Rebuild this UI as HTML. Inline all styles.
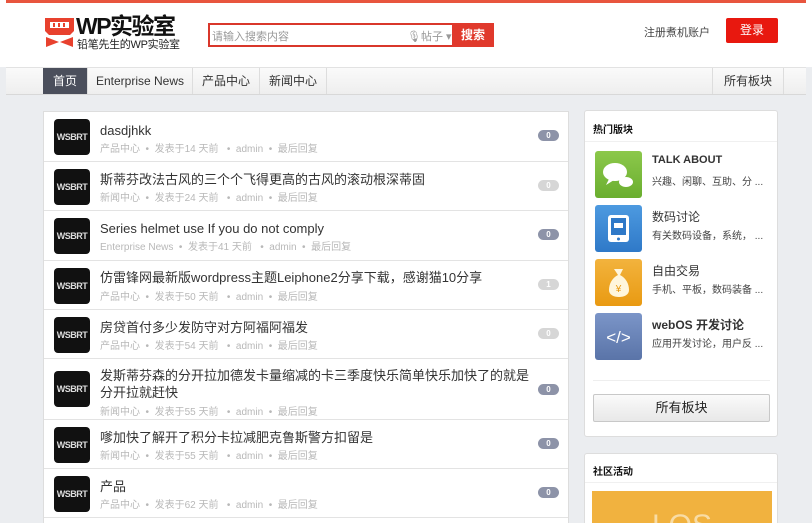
<!DOCTYPE html>
<html><head><meta charset="utf-8"><style>
*{margin:0;padding:0;box-sizing:border-box}
html,body{width:812px;height:523px;overflow:hidden}
body{background:#ebedf0;font-family:"Liberation Sans","Noto Sans CJK SC",sans-serif;position:relative}
.abs{position:absolute}
#hdr{left:0;top:0;width:812px;height:67px;background:#fff}
#red{left:6px;top:0;width:800px;height:3px;background:#e8553e}
#nav{left:6px;top:67px;width:800px;height:28px;background:linear-gradient(#fafafa,#eeeeee);border-top:1px solid #e2e2e2;border-bottom:1px solid #d8d8d8}
.ni{position:absolute;top:0;height:26px;line-height:26px;font-size:12px;color:#333;text-align:center;border-right:1px solid #ddd}
#list{left:43px;top:111px;width:526px;height:420px;background:#fff;border:1px solid #ddd}
.row{position:absolute;left:0;width:524px;border-bottom:1px solid #e3e3e3}
.av{position:absolute;left:10px;top:7px;width:36px;height:36px;background:#111;border-radius:4px;color:#ddd;font:bold 9px "Liberation Sans",sans-serif;line-height:36px;text-align:center;letter-spacing:-0.5px}
.tt{position:absolute;left:56px;font-size:13px;color:#333;line-height:17px;white-space:nowrap}
.mt{position:absolute;left:56px;font-size:10px;color:#b8b8b8;white-space:pre}
.bd{position:absolute;left:494px;width:21px;height:11px;border-radius:6px;background:#8d93a8;color:#fff;font-size:8px;line-height:11px;text-align:center;font-weight:bold}
.bd.l{background:#d6d6d6}
.pan{background:#fff;border:1px solid #ddd;border-radius:3px}
.ic{position:absolute;left:10px;width:47px;height:47px;border-radius:3px}
.st{position:absolute;left:67px;font-size:12px;color:#333}
.sd{position:absolute;left:67px;font-size:10px;color:#444}
</style></head><body>
<div id="hdr" class="abs"></div>
<div id="red" class="abs"></div>
<div class="abs" style="left:44px;top:15px;width:31px;height:34px;">
<svg width="31" height="34" viewBox="0 0 31 34"><path d="M1 3h29v13l-4 4H5l-4-4z" fill="#e8412e"/><rect x="6" y="7" width="19" height="6" fill="#fff"/><rect x="9" y="8" width="2" height="4" fill="#e8412e"/><rect x="14" y="8" width="2" height="4" fill="#e8412e"/><rect x="19" y="8" width="2" height="4" fill="#e8412e"/><path d="M2 22l13 5-13 5z" fill="#e8412e"/><path d="M29 22l-13 5 13 5z" fill="#e8412e"/></svg></div>
<div class="abs" style="left:76px;top:12px;font:bold 23px 'Liberation Sans','Noto Sans CJK SC',sans-serif;color:#111;letter-spacing:-1.5px;line-height:28px">WP实验室</div>
<div class="abs" style="left:77px;top:38px;font-size:11px;color:#222;line-height:14px;letter-spacing:-0.3px">铅笔先生的WP实验室</div>
<div class="abs" style="left:208px;top:23px;width:286px;height:24px;border:2px solid #d9372b;background:#fff"></div>
<div class="abs" style="left:212px;top:28px;font-size:11px;color:#999">请输入搜索内容</div>
<div class="abs" style="left:407px;top:28px;font-size:11px;color:#999">🎙帖子 ▾</div>
<div class="abs" style="left:452px;top:23px;width:42px;height:24px;background:#e0392c;color:#fff;font-size:12px;font-weight:bold;line-height:24px;text-align:center">搜索</div>
<div class="abs" style="left:644px;top:24px;font-size:11px;color:#444">注册煮机账户</div>
<div class="abs" style="left:726px;top:18px;width:52px;height:25px;background:#e8180f;border-radius:2px;color:#fff;font-size:12px;text-align:center;line-height:25px">登录</div>
<div id="nav" class="abs">
<div class="ni" style="left:37px;width:45px;background:#4b4f5c;color:#fff">首页</div>
<div class="ni" style="left:82px;width:105px">Enterprise News</div>
<div class="ni" style="left:187px;width:67px">产品中心</div>
<div class="ni" style="left:254px;width:67px">新闻中心</div>
<div class="ni" style="left:706px;width:72px;border-left:1px solid #ddd">所有板块</div>
</div>
<div id="list" class="abs">
<div class="row" style="top:0;height:50px"><div class="av">WSBRT</div><div class="tt" style="top:10px">dasdjhkk</div><div class="mt" style="top:28px">产品中心  •  发表于14 天前   •  admin  •  最后回复</div><div class="bd" style="top:18px">0</div></div>
<div class="row" style="top:50px;height:49px"><div class="av">WSBRT</div><div class="tt" style="top:9px">斯蒂芬改法古风的三个个飞得更高的古风的滚动根深蒂固</div><div class="mt" style="top:27px">新闻中心  •  发表于24 天前   •  admin  •  最后回复</div><div class="bd l" style="top:18px">0</div></div>
<div class="row" style="top:99px;height:50px"><div class="av">WSBRT</div><div class="tt" style="top:9px">Series helmet use If you do not comply</div><div class="mt" style="top:27px">Enterprise News  •  发表于41 天前   •  admin  •  最后回复</div><div class="bd" style="top:18px">0</div></div>
<div class="row" style="top:149px;height:49px"><div class="av">WSBRT</div><div class="tt" style="top:8px">仿雷锋网最新版wordpress主题Leiphone2分享下载，感谢猫10分享</div><div class="mt" style="top:27px">产品中心  •  发表于50 天前   •  admin  •  最后回复</div><div class="bd l" style="top:18px">1</div></div>
<div class="row" style="top:198px;height:49px"><div class="av">WSBRT</div><div class="tt" style="top:9px">房贷首付多少发防守对方阿福阿福发</div><div class="mt" style="top:27px">产品中心  •  发表于54 天前   •  admin  •  最后回复</div><div class="bd l" style="top:18px">0</div></div>
<div class="row" style="top:247px;height:61px"><div class="av" style="top:12px">WSBRT</div><div class="tt" style="top:8px">发斯蒂芬森的分开拉加德发卡量缩减的卡三季度快乐简单快乐加快了的就是<br>分开拉就赶快</div><div class="mt" style="top:44px">新闻中心  •  发表于55 天前   •  admin  •  最后回复</div><div class="bd" style="top:25px">0</div></div>
<div class="row" style="top:308px;height:49px"><div class="av">WSBRT</div><div class="tt" style="top:9px">嗲加快了解开了积分卡拉减肥克鲁斯警方扣留是</div><div class="mt" style="top:27px">新闻中心  •  发表于55 天前   •  admin  •  最后回复</div><div class="bd" style="top:18px">0</div></div>
<div class="row" style="top:357px;height:49px"><div class="av">WSBRT</div><div class="tt" style="top:9px">产品</div><div class="mt" style="top:27px">产品中心  •  发表于62 天前   •  admin  •  最后回复</div><div class="bd" style="top:18px">0</div></div>
</div>
<div class="abs pan" style="left:584px;top:110px;width:194px;height:327px">
<div style="position:absolute;left:8px;top:10px;font-size:10px;font-weight:bold;color:#111">热门版块</div>
<div style="position:absolute;left:0;top:30px;width:192px;border-top:1px solid #f0f0f0"></div>
<div class="ic" style="top:40px;background:linear-gradient(#8cc84b,#6aae2f)"><svg width="47" height="47"><ellipse cx="20" cy="21" rx="12" ry="9" fill="#fff"/><path d="M14 28l-3 6 8-5z" fill="#fff"/><ellipse cx="31" cy="31" rx="7" ry="5" fill="#fff"/></svg></div>
<div class="st" style="top:43px;font-weight:bold;font-size:11px">TALK ABOUT</div><div class="sd" style="top:62px">兴趣、闲聊、互助、分 ...</div>
<div class="ic" style="top:94px;background:linear-gradient(#4d9ae0,#2f79c8)"><svg width="47" height="47"><rect x="13" y="10" width="21" height="27" rx="3" fill="#fff"/><rect x="16" y="13" width="15" height="17" fill="#2f79c8"/><rect x="19" y="18" width="9" height="5" fill="#fff"/><circle cx="23.5" cy="34" r="1.5" fill="#2f79c8"/></svg></div>
<div class="st" style="top:97px">数码讨论</div><div class="sd" style="top:116px">有关数码设备，系统，  ...</div>
<div class="ic" style="top:148px;background:linear-gradient(#f2b33d,#e99a12)"><svg width="47" height="47"><path d="M19 10h9l-3 6c6 3 9 9 9 15 0 5-5 7-10 7s-10-2-10-7c0-6 3-12 9-15z" fill="#fff6dc"/><text x="23.5" y="33" font-size="10" text-anchor="middle" fill="#e99a12" font-family="Liberation Sans">¥</text></svg></div>
<div class="st" style="top:151px">自由交易</div><div class="sd" style="top:170px">手机、平板，数码装备 ...</div>
<div class="ic" style="top:202px;background:linear-gradient(#7b95c8,#5a74a8)"><svg width="47" height="47"><text x="23.5" y="30" font-size="17" text-anchor="middle" fill="#fff" font-family="Liberation Sans">&lt;/&gt;</text></svg></div>
<div class="st" style="top:205px;font-weight:bold">webOS 开发讨论</div><div class="sd" style="top:224px">应用开发讨论，用户反 ...</div>
<div style="position:absolute;left:8px;top:269px;width:177px;border-top:1px solid #eee"></div>
<div style="position:absolute;left:8px;top:283px;width:177px;height:28px;border:1px solid #c8c8c8;border-radius:2px;background:linear-gradient(#fafafa,#e8e8e8);text-align:center;line-height:26px;font-size:13px;color:#222">所有板块</div>
</div>
<div class="abs pan" style="left:584px;top:453px;width:194px;height:80px">
<div style="position:absolute;left:8px;top:9px;font-size:10px;font-weight:bold;color:#111">社区活动</div>
<div style="position:absolute;left:0;top:28px;width:192px;border-top:1px solid #f0f0f0"></div>
<div style="position:absolute;left:7px;top:37px;width:180px;height:50px;background:#f1b23f;overflow:hidden"><div style="position:absolute;left:60px;top:18px;font-size:30px;color:#f8dca5;font-weight:300">LOS</div></div>
</div>
</body></html>
